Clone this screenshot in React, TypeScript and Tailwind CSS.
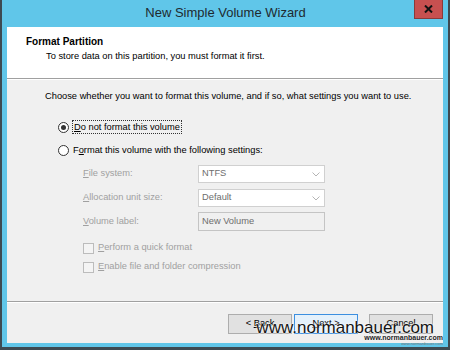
const font = { fontFamily: '"Liberation Sans", Arial, sans-serif' };

const Radio = ({ checked }: { checked?: boolean }) => (
  <span className="w-[11px] h-[11px] rounded-full border border-[#333333] bg-white flex items-center justify-center shrink-0">
    {checked && <span className="w-[5px] h-[5px] rounded-full bg-[#333333]" />}
  </span>
);

const Checkbox = () => (
  <span className="w-[11px] h-[11px] border border-[#bcbcbc] bg-[#f4f4f4] shrink-0" />
);

const Combo = ({ value }: { value: string }) => (
  <div className="w-[127px] h-[18px] border border-[#d0d0d0] bg-white flex items-center justify-between pl-[3px] pr-[4px]">
    <span className="text-[#6d6d6d]">{value}</span>
    <svg width="8" height="5" viewBox="0 0 8 5">
      <path d="M0.5 0.5 L4 4 L7.5 0.5" fill="none" stroke="#b5b5b5" strokeWidth="1" />
    </svg>
  </div>
);

const FieldRow = ({ label, mnemonic, children, className }: { label: string; mnemonic: string; children: React.ReactNode; className: string }) => (
  <div className={`flex items-center ${className}`}>
    <span className="w-[115px] text-[#a0a0a0]">
      <span className="underline">{mnemonic}</span>
      {label}
    </span>
    {children}
  </div>
);

export default function App() {
  return (
    <div className="w-[450px] h-[350px] bg-[#3d4a52] pl-[2px] pr-[2px] pb-[3px] relative overflow-hidden" style={font}>
      <div className="w-full h-full bg-[#60c6e9] flex flex-col px-[5px] pb-[4px]">
        {/* Title bar */}
        <div className="h-[27px] flex items-center justify-between shrink-0">
          <div className="w-[28px]" />
          <div className="text-[13px] text-[#1e2a30] pl-[2px] pb-[1px]">New Simple Volume Wizard</div>
          <div className="w-[29px] h-[19px] self-start bg-[#c75050] border border-[#8a3a3a] border-t-0 flex items-center justify-center">
            <svg width="9" height="8" viewBox="0 0 9 8">
              <path d="M1 0.5 L8 7.5 M8 0.5 L1 7.5" stroke="#111" strokeWidth="2" />
            </svg>
          </div>
        </div>

        {/* Content */}
        <div className="flex-1 flex flex-col bg-[#f0f0f0] text-[9.3px] text-black">
          {/* Header */}
          <div className="h-[52px] bg-white border-b border-[#a0a0a0] pt-[9px] pl-[19px] shrink-0">
            <div className="font-bold text-[10px] leading-[12px]">Format Partition</div>
            <div className="leading-[12px] mt-[2px] pl-[20px]">To store data on this partition, you must format it first.</div>
          </div>

          {/* Body */}
          <div className="flex-1 border-t border-white border-b border-b-[#a0a0a0] flex flex-col pl-[38px]">
            <div className="leading-[12px] mt-[10px]">
              Choose whether you want to format this volume, and if so, what settings you want to use.
            </div>

            <div className="flex items-center mt-[19px] pl-[13px] h-[12px]">
              <Radio checked />
              <span className="ml-[3px] px-[1px] border border-dotted border-[#333] leading-[12px]">
                <span className="underline">D</span>o not format this volume
              </span>
            </div>

            <div className="flex items-center mt-[11px] pl-[13px] h-[12px]">
              <Radio />
              <span className="ml-[4px] leading-[12px]">
                F<span className="underline">o</span>rmat this volume with the following settings:
              </span>
            </div>

            <div className="pl-[38px]">
              <FieldRow label="ile system:" mnemonic="F" className="mt-[9px] h-[18px]">
                <Combo value="NTFS" />
              </FieldRow>
              <FieldRow label="llocation unit size:" mnemonic="A" className="mt-[6px] h-[18px]">
                <Combo value="Default" />
              </FieldRow>
              <FieldRow label="olume label:" mnemonic="V" className="mt-[5px] h-[19px]">
                <div className="w-[127px] h-[19px] border border-[#c4c4c4] bg-[#f0f0f0] pl-[3px] pt-[2px] text-[#6d6d6d] leading-[12px]">
                  New Volume
                </div>
              </FieldRow>

              <div className="flex items-center mt-[11px] h-[12px]">
                <Checkbox />
                <span className="ml-[4px] text-[#a0a0a0]">
                  <span className="underline">P</span>erform a quick format
                </span>
              </div>
              <div className="flex items-center mt-[7px] h-[12px]">
                <Checkbox />
                <span className="ml-[4px] text-[#a0a0a0]">
                  <span className="underline">E</span>nable file and folder compression
                </span>
              </div>
            </div>
          </div>

          {/* Buttons */}
          <div className="h-[41px] border-t border-white flex items-start justify-end pt-[11px] pr-[10px] shrink-0">
            <button className="w-[64px] h-[20px] border border-[#adadad] bg-[#e1e1e1] text-black">
              &lt; <span className="underline">B</span>ack
            </button>
            <button className="w-[64px] h-[20px] ml-[2px] border border-[#3c8fe0] bg-[#e5f1fb] text-black">
              <span className="underline">N</span>ext &gt;
            </button>
            <button className="w-[64px] h-[20px] ml-[11px] border border-[#adadad] bg-[#e1e1e1] text-black">
              Cancel
            </button>
          </div>
        </div>
      </div>

      {/* Watermark */}
      <div className="absolute right-[16px] bottom-[13px] text-[17px] leading-[18px] text-[#151515] [text-shadow:0_0_2px_#fff,0_0_2px_#fff]">
        www.normanbauer.com
      </div>
      <div className="absolute right-[7px] bottom-[4px] flex flex-col items-end">
        <div className="text-[7px] leading-[8px] font-bold text-[#222] [text-shadow:0_0_1px_#fff]">www.normanbauer.com</div>
        <div className="text-[4px] leading-[4px] text-[#777]">www.normanbauer.com</div>
      </div>
    </div>
  );
}
